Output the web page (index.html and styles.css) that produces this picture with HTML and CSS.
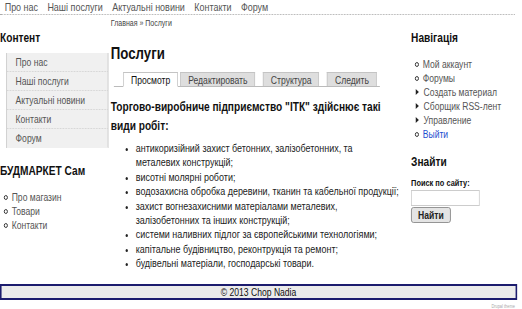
FILE: index.html
```html
<!DOCTYPE html>
<html lang="uk">
<head>
  <meta charset="UTF-8">
  <meta name="viewport" content="width=device-width, initial-scale=1.0">
  <title>Послуги</title>
  <link rel="stylesheet" href="styles.css">
</head>
<body>
<div class="site">
  <div class="top-menu">
    <a href="#">Про нас</a>
    <a href="#">Наші послуги</a>
    <a href="#">Актуальні новини</a>
    <a href="#">Контакти</a>
    <a href="#">Форум</a>
  </div>

  <div class="breadcrumb">Главная » Послуги</div>

  <div class="page">
    <div class="left-col">
      <h2 class="block-title">Контент</h2>
      <ul class="side-menu">
        <li>Про нас</li>
        <li>Наші послуги</li>
        <li>Актуальні новини</li>
        <li>Контакти</li>
        <li>Форум</li>
      </ul>

      <h2 class="block-title shop-title">БУДМАРКЕТ Сам</h2>
      <ul class="link-list">
        <li class="circle">Про магазин</li>
        <li class="circle">Товари</li>
        <li class="circle">Контакти</li>
      </ul>
    </div>

    <div class="main-col">
      <h1 class="page-title">Послуги</h1>
      <div class="tabs">
        <span class="tab active">Просмотр</span>
        <span class="tab">Редактировать</span>
        <span class="tab">Структура</span>
        <span class="tab">Следить</span>
      </div>
      <p class="lead">Торгово-виробниче підприємство "ІТК" здійснює такі види робіт:</p>
      <ul class="works">
        <li>антикоризійний захист бетонних, залізобетонних, та<br>металевих конструкцій;</li>
        <li>висотні молярні роботи;</li>
        <li>водозахисна обробка деревини, тканин та кабельної продукції;</li>
        <li>захист вогнезахисними матеріалами металевих, залізобетонних та інших конструкцій;</li>
        <li>системи наливних підлог за європейськими технологіями;</li>
        <li>капітальне будівництво, реконтрукція та ремонт;</li>
        <li>будівельні матеріали, господарські товари.</li>
      </ul>
    </div>

    <div class="right-col">
      <h2 class="block-title">Навігація</h2>
      <ul class="link-list">
        <li class="circle">Мой аккаунт</li>
        <li class="circle">Форумы</li>
        <li class="arrow">Создать материал</li>
        <li class="arrow">Сборщик RSS-лент</li>
        <li class="arrow">Управление</li>
        <li class="circle logout">Выйти</li>
      </ul>

      <h2 class="block-title search-title">Знайти</h2>
      <label class="search-label">Поиск по сайту:</label>
      <input class="search-input" type="text">
      <button class="search-button">Найти</button>
    </div>
  </div>

  <div class="footer">© 2013 Chop Nadia</div>
  <div class="credit">Drupal theme</div>
</div>
</body>
</html>
```

FILE: styles.css
```css
body{
  margin: 0;
  height: 309px;
  overflow: hidden;
  background-color: white;
  font-family: "Liberation Sans", Arial, sans-serif;
  color: #333;
}
.site{
  width: 669px;
  transform: scaleX(0.78);
  transform-origin: 0 0;
}
ul{
  margin: 0;
  padding: 0;
  list-style: none;
}
h1, h2, p{
  margin: 0;
}

.top-menu{
  display: flex;
  gap: 12px;
  height: 14px;
  padding-left: 6px;
  width: 654px;
  border-bottom: 1px dotted #aaa;
  font-size: 11.5px;
  line-height: 14px;
}
.top-menu a{
  color: #555;
  text-decoration: none;
}

.breadcrumb{
  padding-left: 142px;
  height: 15px;
  font-size: 9px;
  line-height: 16px;
  color: #444;
}

.page{
  display: grid;
  grid-template-columns: 139px 375px 149px;
  column-gap: 3px;
  height: 254px;
}

.block-title{
  font-size: 13px;
  line-height: 16px;
  color: #111;
}

/* left column */
.left-col .block-title{
  margin-top: 0;
}
.side-menu{
  margin: 7px 0 0 8px;
  border-left: 1px solid #c8c8c8;
  border-right: 1px solid #c8c8c8;
  background-color: #f0f0f0;
  font-size: 11px;
  color: #555;
}
.side-menu li{
  height: 18px;
  line-height: 18px;
  padding-left: 11px;
  border-bottom: 1px dotted #d0d0d0;
}
.side-menu li:last-child{
  border-bottom: 1px solid #f0f0f0;
}
.left-col .shop-title{
  margin-top: 15px;
}
.left-col .link-list{
  margin-top: 11px;
  padding-left: 5px;
}

.link-list{
  font-size: 11px;
  line-height: 14px;
  color: #555;
}
.link-list li{
  display: flex;
  align-items: center;
  gap: 5px;
}
.link-list li.circle::before{
  content: "";
  width: 3px;
  height: 3px;
  border: 1px solid #222;
  border-radius: 50%;
}
.link-list li.arrow::before{
  content: "";
  width: 0;
  height: 0;
  margin: 0 1px;
  border-top: 3px solid transparent;
  border-bottom: 3px solid transparent;
  border-left: 4px solid #222;
}
.link-list li.logout{
  color: #1f4fd0;
}

/* main column */
.page-title{
  margin-top: 14px;
  font-size: 17px;
  line-height: 20px;
  color: #111;
}
.tabs{
  display: flex;
  gap: 10px;
  margin: 8px 0 0 4px;
  padding-left: 12px;
  width: 329px;
  border-bottom: 1px solid #bbb;
}
.tab{
  padding: 0 9px;
  height: 13px;
  margin-bottom: -1px;
  font-size: 11px;
  line-height: 14px;
  color: #444;
  background-color: #dedede;
  border: 1px solid #c4c4c4;
  border-bottom: none;
}
.tab.active{
  margin-right: -7px;
  background-color: white;
  border-bottom: 1px solid white;
  color: #111;
}
.lead{
  margin-top: 10px;
  font-size: 13px;
  font-weight: bold;
  line-height: 19px;
  color: #111;
}
.works{
  margin-top: 6px;
  padding-left: 32px;
  list-style: disc;
  font-size: 11.5px;
  line-height: 14.4px;
  color: #222;
}

/* right column */
.right-col{
  padding-left: 7px;
}
.right-col .link-list{
  margin-top: 11px;
  padding-left: 5px;
}
.right-col .search-title{
  margin-top: 13px;
}
.search-label{
  display: block;
  margin-top: 7px;
  font-size: 9.5px;
  font-weight: bold;
  line-height: 12px;
  color: #111;
}
.search-input{
  display: block;
  margin-top: 1px;
  width: 86px;
  height: 14px;
  padding: 0;
  border: 1px solid #ccc;
}
.search-button{
  display: block;
  margin-top: 1px;
  height: 16px;
  padding: 0 8px;
  font-family: inherit;
  font-size: 11px;
  font-weight: bold;
  line-height: 12px;
  color: #222;
  background-color: #e4e4e4;
  border: 1px solid #888;
  border-radius: 3px;
}

.footer{
  width: 659px;
  height: 12px;
  border: 2px solid #1c1c6e;
  background-color: #ebebeb;
  font-size: 11px;
  line-height: 12px;
  text-align: center;
  color: #111;
}
.credit{
  width: 660px;
  margin-top: 3px;
  text-align: right;
  font-size: 5px;
  color: #aaa;
}
```
